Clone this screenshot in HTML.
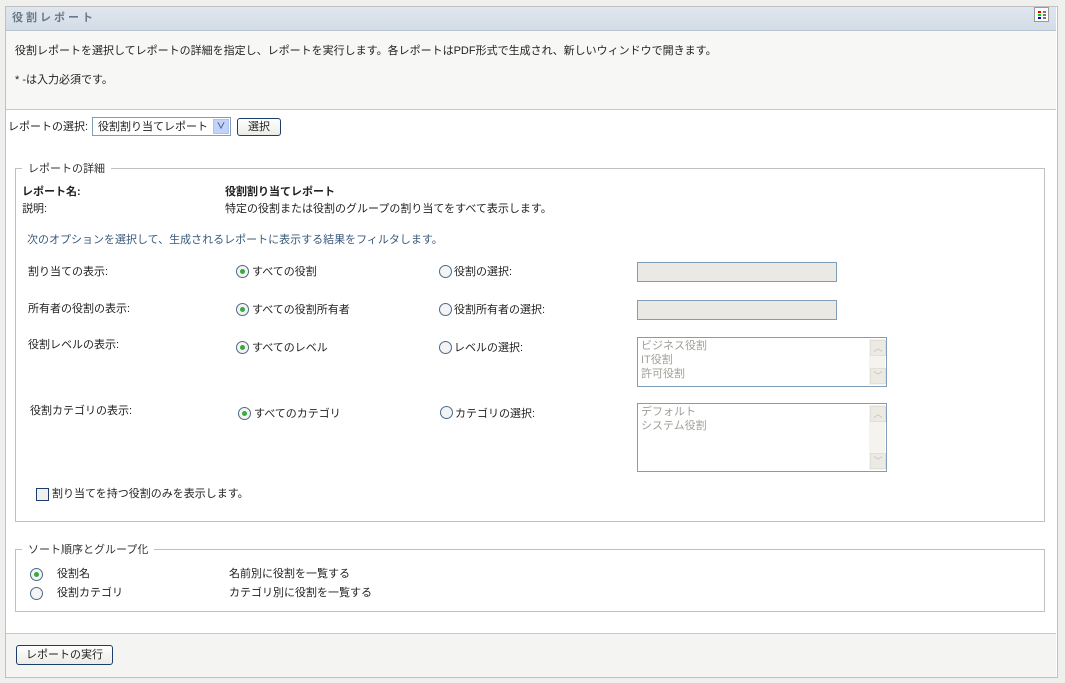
<!DOCTYPE html>
<html><head><meta charset="utf-8"><style>
body{margin:0;width:1065px;height:683px;background:#efefed;font-family:"Liberation Sans","Noto Sans CJK JP",sans-serif;font-size:11px;color:#222;position:relative;overflow:hidden}
.a{position:absolute;white-space:nowrap;line-height:16px}
#panel{position:absolute;left:5px;top:6px;width:1051px;height:670px;border:1px solid #c0c0c0;background:#fff}
.radio{position:absolute;width:11px;height:11px;border:1px solid #4a6a8a;border-radius:50%;background:#f4f4f4}
.radio.on::after{content:"";position:absolute;left:3px;top:3px;width:5px;height:5px;border-radius:50%;background:#3aaa3a}
.tb{position:absolute;width:198px;height:18px;border:1px solid #7f9db9;background:#ebe9e3}
.lb{position:absolute;width:250px;border:1px solid #7f9db9;background:#fff;color:#a0a098;line-height:14px;padding:1px 3px;box-sizing:border-box}
.sb{position:absolute;right:1px;top:1px;bottom:1px;width:16px;background:#f4f3ee}
.sb i{position:absolute;left:1px;width:14px;height:14px;border:1px solid #e0dfd8;background:#eceae3;font-style:normal;font-size:9px;color:#bbb;text-align:center;line-height:14px}
fieldset{position:absolute;border:1px solid #c0c0c0;margin:0;padding:0}
legend{padding:0 6px;margin-left:6px;font-size:11px;color:#333}
.btn{position:absolute;border:1px solid #1c3e6a;border-radius:3px;background:linear-gradient(#fff,#ecebe6);font-size:11px;text-align:center;box-sizing:border-box}
</style></head><body>
<div id="panel"></div>
<div class="a" style="left:6px;top:7px;width:1050px;height:23px;background:linear-gradient(#e0e6ee,#d3dde7);border-bottom:1px solid #b8c4d0"></div>
<div class="a" style="left:12px;top:10px;font-weight:bold;color:#6a7a8a;font-size:11px;letter-spacing:3px">役割レポート</div>
<div class="a" style="left:1034px;top:7px;width:13px;height:13px;border:1px solid #999;background:#fff">
<svg width="13" height="13"><rect x="3" y="3" width="3" height="2" fill="#e00"/><rect x="3" y="6" width="3" height="2" fill="#0c0"/><rect x="3" y="9" width="3" height="2" fill="#00c"/><rect x="8" y="3" width="3" height="2" fill="#777"/><rect x="8" y="6" width="3" height="2" fill="#777"/><rect x="8" y="9" width="3" height="2" fill="#777"/></svg></div>
<div class="a" style="left:6px;top:31px;width:1050px;height:78px;background:#f7f7f6;border-bottom:1px solid #c8c8c8"></div>
<div class="a" style="left:15px;top:43px">役割レポートを選択してレポートの詳細を指定し、レポートを実行します。各レポートはPDF形式で生成され、新しいウィンドウで開きます。</div>
<div class="a" style="left:15px;top:72px">* -は入力必須です。</div>
<div class="a" style="left:8px;top:119px">レポートの選択:</div>
<div class="a" style="left:92px;top:117px;width:139px;height:19px;border:1px solid #7f9db9;background:#fff;box-sizing:border-box"><span class="a" style="left:5px;top:1px">役割割り当てレポート</span><span class="a" style="right:1px;top:1px;width:16px;height:15px;background:#c1d3fb;border:1px solid #b0c4ee;box-sizing:border-box;color:#4d6185;font-size:9px;font-weight:bold;text-align:center;line-height:13px">∨</span></div>
<div class="btn" style="left:237px;top:118px;width:44px;height:18px;line-height:16px">選択</div>

<fieldset style="left:15px;top:160px;width:1028px;height:360px"><legend>レポートの詳細</legend></fieldset>
<div class="a" style="left:22px;top:184px;font-weight:bold">レポート名:</div>
<div class="a" style="left:225px;top:184px;font-weight:bold">役割割り当てレポート</div>
<div class="a" style="left:22px;top:201px">説明:</div>
<div class="a" style="left:225px;top:201px">特定の役割または役割のグループの割り当てをすべて表示します。</div>
<div class="a" style="left:27px;top:232px;color:#3a5a7a">次のオプションを選択して、生成されるレポートに表示する結果をフィルタします。</div>

<div class="a" style="left:28px;top:264px">割り当ての表示:</div>
<div class="radio on" style="left:236px;top:265px"></div><div class="a" style="left:252px;top:264px">すべての役割</div>
<div class="radio" style="left:439px;top:265px"></div><div class="a" style="left:454px;top:264px">役割の選択:</div>
<div class="tb" style="left:637px;top:262px"></div>

<div class="a" style="left:28px;top:301px">所有者の役割の表示:</div>
<div class="radio on" style="left:236px;top:303px"></div><div class="a" style="left:252px;top:302px">すべての役割所有者</div>
<div class="radio" style="left:439px;top:303px"></div><div class="a" style="left:454px;top:302px">役割所有者の選択:</div>
<div class="tb" style="left:637px;top:300px"></div>

<div class="a" style="left:28px;top:337px">役割レベルの表示:</div>
<div class="radio on" style="left:236px;top:341px"></div><div class="a" style="left:252px;top:340px">すべてのレベル</div>
<div class="radio" style="left:439px;top:341px"></div><div class="a" style="left:454px;top:340px">レベルの選択:</div>
<div class="lb" style="left:637px;top:337px;height:50px">ビジネス役割<br>IT役割<br>許可役割<div class="sb"><i style="top:1px">︿</i><i style="bottom:1px">﹀</i></div></div>

<div class="a" style="left:30px;top:403px">役割カテゴリの表示:</div>
<div class="radio on" style="left:238px;top:407px"></div><div class="a" style="left:254px;top:406px">すべてのカテゴリ</div>
<div class="radio" style="left:440px;top:406px"></div><div class="a" style="left:455px;top:406px">カテゴリの選択:</div>
<div class="lb" style="left:637px;top:403px;height:69px">デフォルト<br>システム役割<div class="sb"><i style="top:1px">︿</i><i style="bottom:1px">﹀</i></div></div>

<div class="a" style="left:36px;top:488px;width:11px;height:11px;border:1px solid #1c3e6a;background:#f0f0ec"></div>
<div class="a" style="left:52px;top:486px">割り当てを持つ役割のみを表示します。</div>

<fieldset style="left:15px;top:541px;width:1028px;height:69px"><legend>ソート順序とグループ化</legend></fieldset>
<div class="radio on" style="left:30px;top:568px"></div><div class="a" style="left:57px;top:566px">役割名</div><div class="a" style="left:229px;top:566px">名前別に役割を一覧する</div>
<div class="radio" style="left:30px;top:587px"></div><div class="a" style="left:57px;top:585px">役割カテゴリ</div><div class="a" style="left:229px;top:585px">カテゴリ別に役割を一覧する</div>

<div class="a" style="left:6px;top:633px;width:1050px;height:43px;background:#f4f4f2;border-top:1px solid #c8c8c8"></div>
<div class="btn" style="left:16px;top:645px;width:97px;height:20px;line-height:18px">レポートの実行</div>
</body></html>
